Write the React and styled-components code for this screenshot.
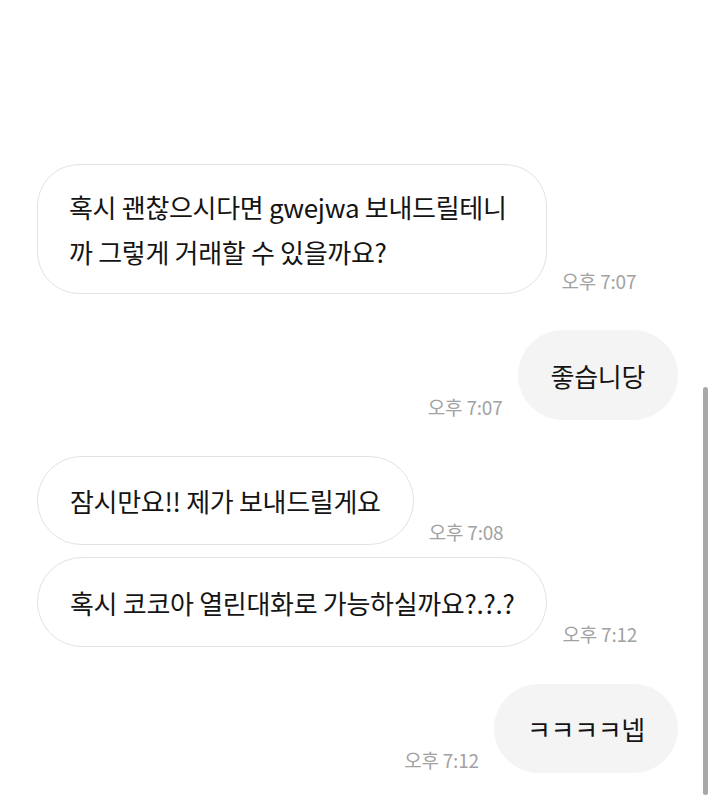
import React from 'react'
import styled, { createGlobalStyle } from 'styled-components'

const GlobalStyle = createGlobalStyle`
  html, body {
    margin: 0;
    padding: 0;
    background: #ffffff;
  }
  body {
    font-family: "Noto Sans CJK KR", "Noto Sans", sans-serif;
  }
`

const Screen = styled.div`
  position: relative;
  width: 714px;
  height: 801px;
  overflow: hidden;
  background: #fff;
`

const Thread = styled.div`
  display: flex;
  flex-direction: column;
  padding: 164px 36px 0 37px;
`

const Row = styled.div`
  display: flex;
  align-items: flex-end;
  gap: 15px;
  flex-direction: ${({ $mine }) => ($mine ? 'row-reverse' : 'row')};
  margin-top: ${({ $gap }) => $gap}px;
`

const Bubble = styled.div`
  box-sizing: border-box;
  padding: ${({ $tall }) => ($tall ? '19px 39px 19px 31px' : '21.5px 32px 21px')};
  border-radius: ${({ $tall }) => ($tall ? '42px' : '45px')};
  background: ${({ $mine }) => ($mine ? '#f4f4f4' : '#ffffff')};
  border: 1.5px solid ${({ $mine }) => ($mine ? '#f4f4f4' : '#e2e2e2')};
  color: #141414;
  font-size: 26px;
  line-height: 45px;
  letter-spacing: -0.3px;
  white-space: nowrap;
`

const Line = styled.div``

const Time = styled.span`
  flex-shrink: 0;
  font-size: 19px;
  line-height: 22px;
  color: #a2a2a2;
  margin-bottom: 2px;
  letter-spacing: -0.2px;
  white-space: nowrap;
`

const ScrollThumb = styled.div`
  position: absolute;
  left: 703px;
  top: 387px;
  width: 5px;
  height: 408px;
  border-radius: 3px;
  background: #a8a8a8;
`

const messages = [
  { text: '혹시 괜찮으시다면 gwejwa 보내드릴테니\n까 그렇게 거래할 수 있을까요?', time: '오후 7:07', gap: 0, tall: true },
  { text: '좋습니당', time: '오후 7:07', gap: 36, mine: true },
  { text: '잠시만요!! 제가 보내드릴게요', time: '오후 7:08', gap: 36 },
  { text: '혹시 코코아 열린대화로 가능하실까요?.?.?', time: '오후 7:12', gap: 12 },
  { text: 'ㅋㅋㅋㅋ넵', time: '오후 7:12', gap: 37, mine: true },
]

const App = () => {
  return (
    <Screen>
      <GlobalStyle />
      <Thread>
        {messages.map((m, i) => (
          <Row key={i} $mine={m.mine} $gap={m.gap}>
            <Bubble $mine={m.mine} $tall={m.tall}>
              {m.text.split('\n').map((line, j) => (
                <Line key={j}>{line}</Line>
              ))}
            </Bubble>
            <Time>{m.time}</Time>
          </Row>
        ))}
      </Thread>
      <ScrollThumb />
    </Screen>
  )
}

export default App
